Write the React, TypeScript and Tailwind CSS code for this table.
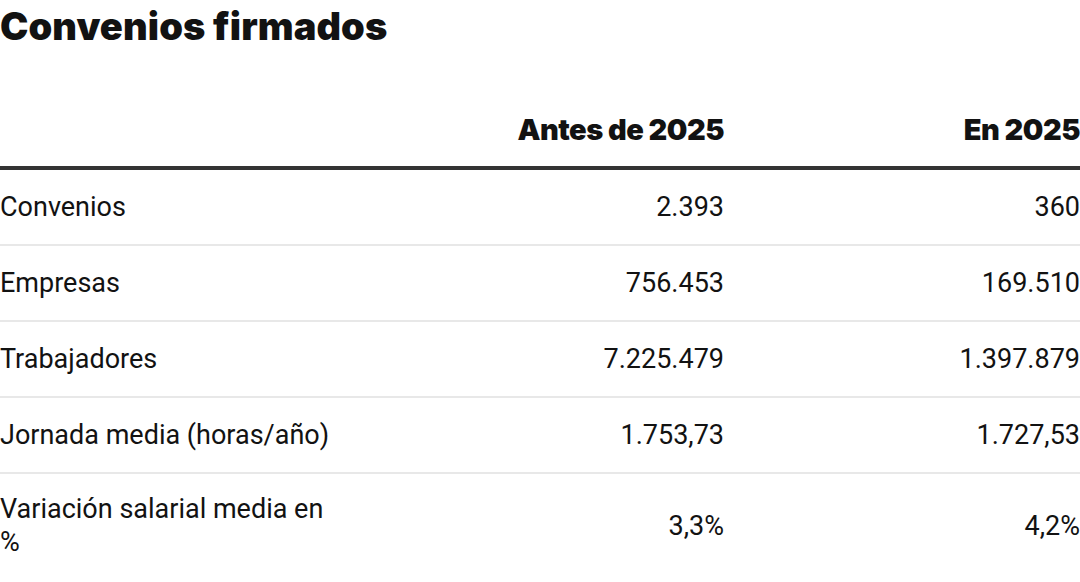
const rows = [
  { label: 'Convenios', before: '2.393', now: '360' },
  { label: 'Empresas', before: '756.453', now: '169.510' },
  { label: 'Trabajadores', before: '7.225.479', now: '1.397.879' },
  { label: 'Jornada media (horas/año)', before: '1.753,73', now: '1.727,53' },
  { label: 'Variación salarial media en %', before: '3,3%', now: '4,2%' },
];

export default function App() {
  return (
    <main className="min-h-screen w-[1080px] bg-white font-['Roboto',sans-serif] text-[#121212]">
      {/* Title */}
      <h1 className="h-[90px] pt-[3px] font-['Inter',sans-serif] text-[38px] font-black leading-[46px] tracking-[0.1px]">
        Convenios firmados
      </h1>

      {/* Header */}
      <div className="grid h-[80px] grid-cols-[344px_380px_356px] items-center border-b-4 border-[#333333] pt-1 font-['Inter',sans-serif] text-[29px] font-black tracking-[-0.5px]">
        <div />
        <div className="text-right">Antes de 2025</div>
        <div className="text-right">En 2025</div>
      </div>

      {/* Rows */}
      {rows.map((row, i) => (
        <div
          key={i}
          className={
            i < rows.length - 1
              ? 'grid h-[76px] grid-cols-[344px_380px_356px] items-center border-b-2 border-[#e8e8e8] text-[27px] leading-[33px]'
              : 'grid grid-cols-[344px_380px_356px] items-center pt-[19px] pb-3 text-[27px] leading-[33px]'
          }
        >
          <div>{row.label}</div>
          <div className="text-right">{row.before}</div>
          <div className="text-right">{row.now}</div>
        </div>
      ))}
    </main>
  );
}
